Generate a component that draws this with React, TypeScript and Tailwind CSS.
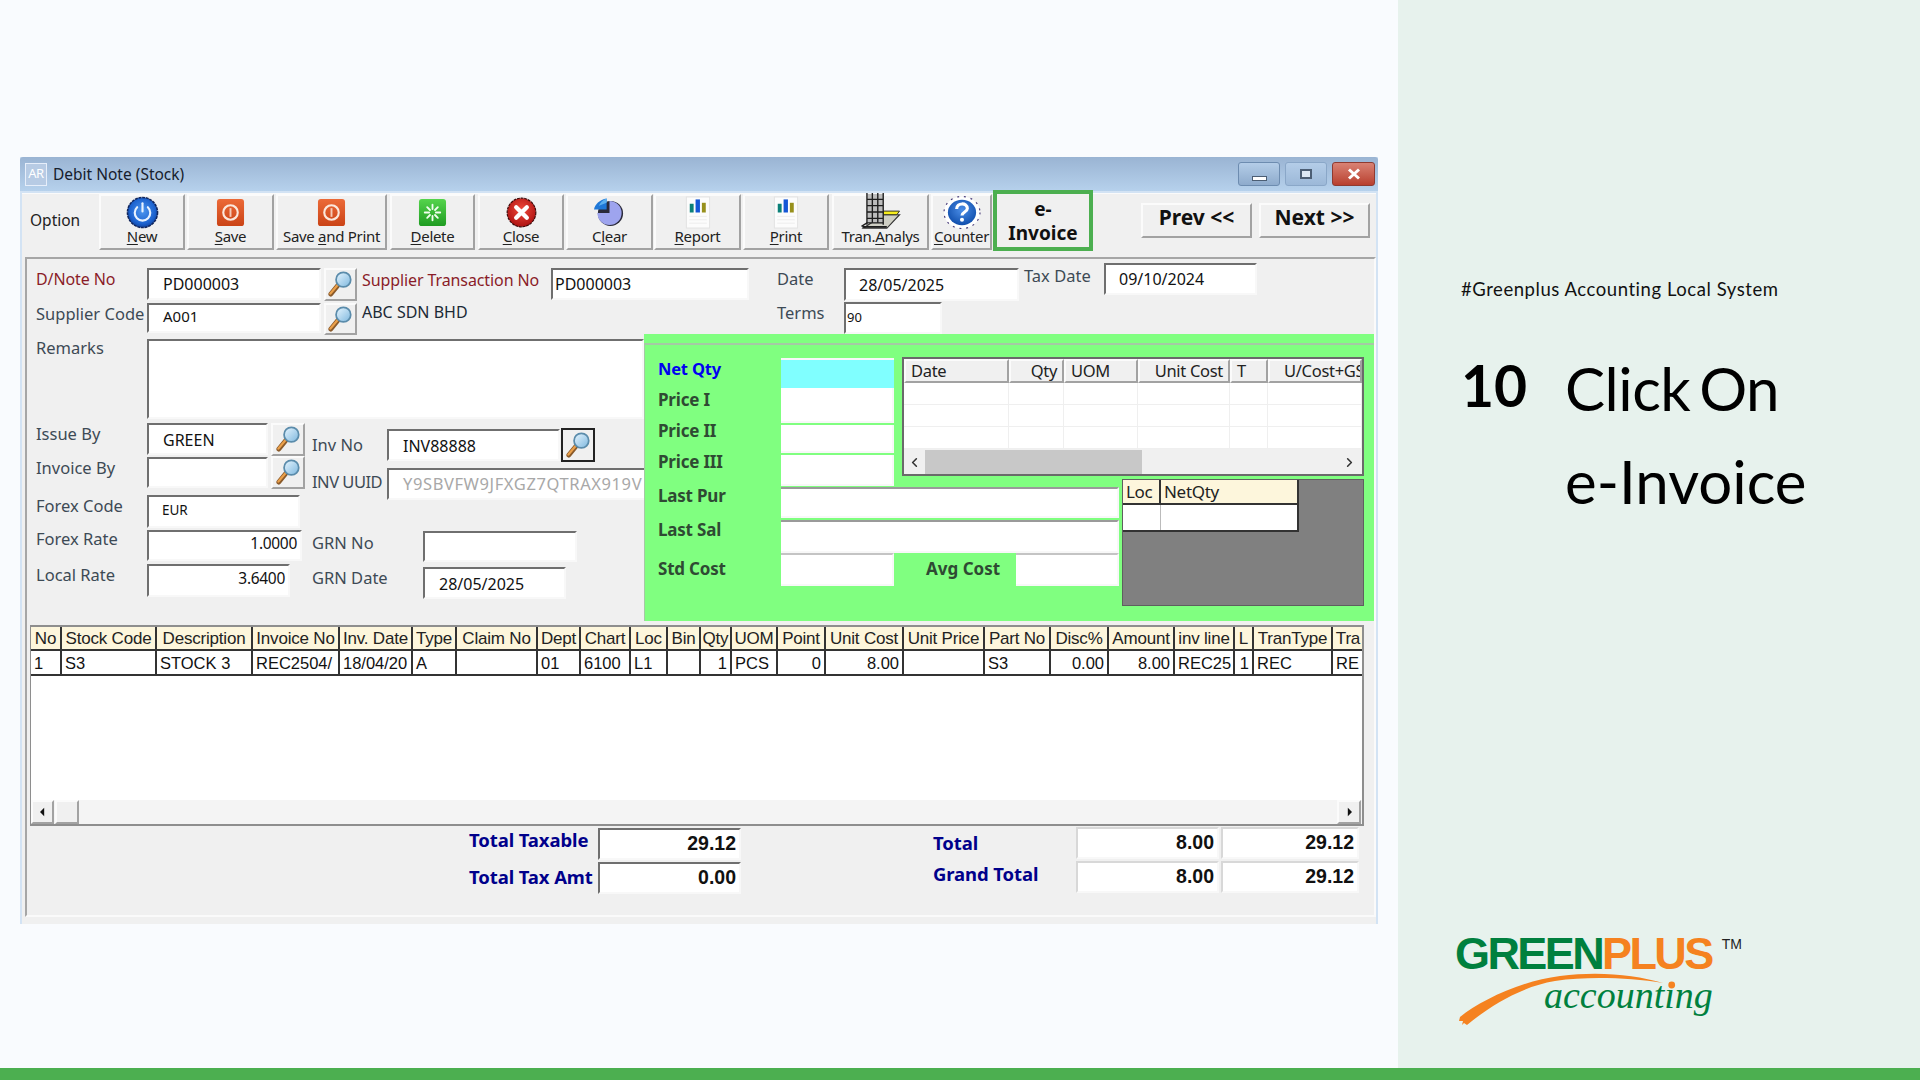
import React from "react";
import { ChevronLeft, ChevronRight } from "lucide-react";

const sunken = "bg-white border-2 border-t-[#6f6f6f] border-l-[#6f6f6f] border-r-[#f8f8f8] border-b-[#f8f8f8]";
const raised = "bg-[#f0f0f0] border-2 border-t-[#fbfbfb] border-l-[#fbfbfb] border-r-[#a2a2a2] border-b-[#a2a2a2]";

function Input({ className = "", children }: { className?: string; children?: React.ReactNode }) {
  return <div className={`${sunken} shrink-0 flex items-center whitespace-nowrap overflow-hidden text-[#111] ${className}`}>{children}</div>;
}

function Lens({ className = "" }: { className?: string }) {
  return (
    <svg viewBox="0 0 28 28" className={`w-[27px] h-[27px] mb-[2px] ${className}`}>
      <defs>
        <linearGradient id="lensg" x1="0" y1="0" x2="1" y2="1">
          <stop offset="0" stopColor="#e8f6ff" />
          <stop offset="1" stopColor="#7db7de" />
        </linearGradient>
      </defs>
      <path d="M4 25 L12 15" stroke="#8a5a2a" strokeWidth="5" strokeLinecap="round" />
      <path d="M3.5 24.5 L11 15.5" stroke="#eba04a" strokeWidth="2.4" strokeLinecap="round" />
      <circle cx="17" cy="10" r="7.6" fill="url(#lensg)" stroke="#5b8cab" strokeWidth="1.8" />
    </svg>
  );
}

function Lookup({ className = "" }: { className?: string }) {
  return <div className={`${raised} shrink-0 flex items-center justify-center ${className}`}><Lens /></div>;
}

function PowerIcon() {
  return (
    <svg viewBox="0 0 34 34" className="w-[33px] h-[33px]">
      <defs>
        <radialGradient id="pw" cx="0.5" cy="0.45" r="0.6">
          <stop offset="0" stopColor="#4d96ef" />
          <stop offset="0.7" stopColor="#1c62cf" />
          <stop offset="1" stopColor="#0d3a92" />
        </radialGradient>
      </defs>
      <circle cx="17" cy="17" r="15.5" fill="url(#pw)" stroke="#12265c" strokeWidth="1.6" strokeDasharray="3 0.8" />
      <path d="M11.5 11.5 A8 8 0 1 0 22.5 11.5" fill="none" stroke="#e8f2ff" strokeWidth="2.2" strokeLinecap="round" />
      <path d="M17 7.5 V16" stroke="#e8f2ff" strokeWidth="2.2" strokeLinecap="round" />
    </svg>
  );
}

function SaveIcon() {
  return (
    <svg viewBox="0 0 30 30" className="w-[29px] h-[29px]">
      <defs>
        <linearGradient id="sv" x1="0" y1="0" x2="0" y2="1">
          <stop offset="0" stopColor="#ec6a38" />
          <stop offset="1" stopColor="#ca4316" />
        </linearGradient>
      </defs>
      <rect x="1" y="1" width="28" height="28" rx="3" fill="url(#sv)" />
      <circle cx="15" cy="15" r="7.5" fill="none" stroke="#fbe7dc" strokeWidth="2.2" />
      <rect x="14" y="10.5" width="2" height="9" fill="#fbe7dc" opacity="0.8" />
    </svg>
  );
}

function DeleteIcon() {
  return (
    <svg viewBox="0 0 30 30" className="w-[29px] h-[29px]">
      <defs>
        <linearGradient id="dl" x1="0" y1="0" x2="0" y2="1">
          <stop offset="0" stopColor="#55d44c" />
          <stop offset="1" stopColor="#1f9c22" />
        </linearGradient>
      </defs>
      <rect x="1" y="1" width="28" height="28" rx="3" fill="url(#dl)" />
      <g stroke="#f2fff0" strokeWidth="1.9" strokeLinecap="round">
        <path d="M15 7 V11.5" /><path d="M15 18.5 V23" /><path d="M7 15 H11.5" /><path d="M18.5 15 H23" />
        <path d="M9.5 9.5 L12.4 12.4" /><path d="M17.6 17.6 L20.5 20.5" /><path d="M20.5 9.5 L17.6 12.4" /><path d="M12.4 17.6 L9.5 20.5" />
      </g>
    </svg>
  );
}

function CloseIcon() {
  return (
    <svg viewBox="0 0 32 32" className="w-[31px] h-[31px]">
      <defs>
        <radialGradient id="cl" cx="0.5" cy="0.4" r="0.65">
          <stop offset="0" stopColor="#f04a3c" />
          <stop offset="1" stopColor="#a80d0d" />
        </radialGradient>
      </defs>
      <circle cx="16" cy="16" r="14.8" fill="url(#cl)" stroke="#3a0a0a" strokeWidth="1.2" strokeDasharray="3 0.8" />
      <path d="M10.5 10.5 L21.5 21.5 M21.5 10.5 L10.5 21.5" stroke="#ffffff" strokeWidth="4.4" strokeLinecap="round" />
    </svg>
  );
}

function ClearIcon() {
  return (
    <svg viewBox="0 0 34 32" className="w-[33px] h-[31px]">
      <circle cx="18" cy="17" r="13" fill="#2a2a3a" />
      <path d="M17 4 A12.5 12.5 0 1 1 4.5 16.5 L17 16.5 Z" fill="#9ea4ee" />
      <path d="M14 1.5 V13 L1 13 C1.5 8 7 2.5 14 1.5 Z" fill="#1f78d8" />
      <path d="M14 1.5 V6 L6 9 C7.5 5.5 10 3 14 1.5 Z" fill="#5bb0f0" />
    </svg>
  );
}

function ChartPage() {
  return (
    <svg viewBox="0 0 26 34" className="w-[26px] h-[33px]">
      <rect x="1" y="1" width="24" height="32" fill="#fcfcfc" stroke="#e2e2e2" />
      <rect x="4.5" y="8" width="4" height="9" fill="#0b8078" />
      <rect x="10.5" y="3.5" width="4.5" height="13.5" fill="#1456d6" />
      <rect x="17" y="7" width="4" height="10" fill="#97901c" />
      <path d="M4 21 H22 M4 24.5 H22 M4 28 H22" stroke="#ececec" strokeWidth="1" />
    </svg>
  );
}

function TranIcon() {
  return (
    <svg viewBox="0 0 46 42" className="w-[43px] h-[38px]">
      <path d="M26 24 H44 L30 39 H4 Z" fill="#cfcfc4" stroke="#333" strokeWidth="1.3" />
      <path d="M26 20 H44 L41 24 H26 Z" fill="#f6ec1c" stroke="#222" strokeWidth="1" />
      <rect x="8" y="1" width="18" height="32" fill="#bdbdbd" />
      <path d="M8 0 V35 M14 0 V33 M20 0 V33 M26 0 V35 M8 7 H26 M8 14 H26 M8 21 H26 M8 28 H26" stroke="#1d1d1d" strokeWidth="1.5" />
      <path d="M2 37 L8 33 H26" fill="none" stroke="#1d1d1d" strokeWidth="1.6" />
      <path d="M3 37.5 H30" stroke="#1d1d1d" strokeWidth="2" />
    </svg>
  );
}

function HelpIcon() {
  return (
    <svg viewBox="0 0 40 36" className="w-[40px] h-[35px]">
      <defs>
        <radialGradient id="hp" cx="0.5" cy="0.4" r="0.65">
          <stop offset="0" stopColor="#4b8ee8" />
          <stop offset="1" stopColor="#0c4aa8" />
        </radialGradient>
      </defs>
      <ellipse cx="20" cy="18" rx="18.5" ry="16.5" fill="#fff" stroke="#4b3f7c" strokeWidth="1.2" strokeDasharray="2 5" />
      <ellipse cx="20" cy="18" rx="14.5" ry="13" fill="url(#hp)" />
      <path d="M14.5 14.5 C14.5 7.5 25.5 7.5 25.5 14 C25.5 17.5 20 17.5 20 21" fill="none" stroke="#fff" strokeWidth="3.2" />
      <circle cx="20" cy="25.5" r="2.1" fill="#fff" />
    </svg>
  );
}

function ToolBtn({ className = "", icon, children }: { className?: string; icon: React.ReactNode; children: React.ReactNode }) {
  return (
    <div className={`${raised} shrink-0 h-[56px] flex flex-col items-center overflow-visible ${className}`}>
      <div className="h-[32px] flex items-center justify-center">{icon}</div>
      <div className="text-[15px] leading-[17px] text-[#222] tracking-[-0.3px] whitespace-nowrap">{children}</div>
    </div>
  );
}

function U({ children }: { children: React.ReactNode }) {
  return <span className="underline underline-offset-2">{children}</span>;
}

function Title() {
  return (
    <div className="h-[34px] flex items-center rounded-t-[3px] bg-gradient-to-b from-[#9ab4d3] to-[#b6d1ec] pl-[5px] pr-[3px]">
      <div className="w-[22px] h-[23px] bg-[#b7cbe4] border border-[#e6eefa] flex items-center justify-center text-white text-[13px] tracking-[-0.5px]">AR</div>
      <div className="ml-[6px] pt-[2px] text-[15.5px] text-[#16202c]">Debit Note (Stock)</div>
      <div className="ml-auto flex items-center gap-[5px]">
        <div className="w-[42px] h-[24px] rounded-[3px] border border-[#6d8cb0] bg-gradient-to-b from-[#b4cde8] to-[#8eabcc] flex items-end justify-center pb-[4px]">
          <div className="w-[15px] h-[5px] bg-white border border-[#4c5e74]" />
        </div>
        <div className="w-[42px] h-[24px] rounded-[3px] border border-[#8aa7c8] bg-gradient-to-b from-[#b4cde8] to-[#9cb8d8] flex items-center justify-center">
          <div className="w-[12px] h-[10px] bg-[#dde8f4] border-2 border-[#4c5e74]" />
        </div>
        <div className="w-[43px] h-[24px] rounded-[3px] border border-[#8f3a30] bg-gradient-to-b from-[#d98274] to-[#b83e2e] flex items-center justify-center text-white">
          <svg viewBox="0 0 14 12" className="w-[14px] h-[12px]"><path d="M2 1.5 L12 10.5 M12 1.5 L2 10.5" stroke="#fff" strokeWidth="3" /></svg>
        </div>
      </div>
    </div>
  );
}

function Toolbar() {
  return (
    <div className="h-[56px] flex bg-[#f0f0f0] border-t border-[#fafafa]">
      <div className="w-[77px] shrink-0 pl-[8px] pb-[2px] flex items-center text-[15.5px] text-[#222]">Option</div>
      <ToolBtn className="w-[86px]" icon={<PowerIcon />}><U>N</U>ew</ToolBtn>
      <ToolBtn className="w-[87px] ml-[2px]" icon={<SaveIcon />}><U>S</U>ave</ToolBtn>
      <ToolBtn className="w-[111px] ml-[2px]" icon={<SaveIcon />}>Save <U>a</U>nd Print</ToolBtn>
      <ToolBtn className="w-[85px] ml-[3px]" icon={<DeleteIcon />}><U>D</U>elete</ToolBtn>
      <ToolBtn className="w-[86px] ml-[3px]" icon={<CloseIcon />}><U>C</U>lose</ToolBtn>
      <ToolBtn className="w-[87px] ml-[2px]" icon={<ClearIcon />}>C<U>l</U>ear</ToolBtn>
      <ToolBtn className="w-[87px] ml-[1px]" icon={<ChartPage />}><U>R</U>eport</ToolBtn>
      <ToolBtn className="w-[86px] ml-[2px]" icon={<ChartPage />}><U>P</U>rint</ToolBtn>
      <ToolBtn className="w-[97px] ml-[3px]" icon={<TranIcon />}>Tran.<U>A</U>nalys</ToolBtn>
      <ToolBtn className="w-[61px] ml-[2px]" icon={<HelpIcon />}><U>C</U>ounter</ToolBtn>
      <div className="shrink-0 w-[100px] h-[61px] -mt-[4px] ml-[1px] border-[4px] border-[#4caf50] bg-[#f0f0f0] flex flex-col items-center justify-center font-bold text-[19px] leading-[24px] text-[#111]">
        <span>e-</span>
        <span>Invoice</span>
      </div>
      <div className={`${raised} shrink-0 w-[111px] h-[35px] mt-[9px] ml-[48px] pb-[5px] flex items-center justify-center font-bold text-[21px] text-[#111]`}>Prev &lt;&lt;</div>
      <div className={`${raised} shrink-0 w-[111px] h-[35px] mt-[9px] ml-[7px] pb-[5px] flex items-center justify-center font-bold text-[21px] text-[#111]`}>Next &gt;&gt;</div>
    </div>
  );
}

const lab = "shrink-0 text-[16.5px] leading-[22px] text-[#3d4a55] whitespace-nowrap";
const redLab = "shrink-0 text-[16px] leading-[22px] tracking-[-0.1px] text-[#8a1c28] whitespace-nowrap";

function HeaderForm() {
  return (
    <div className="h-[75px] flex items-start">
      <div className="mt-[9px] ml-[9px] w-[713px] flex flex-col shrink-0">
        <div className="flex h-[35px]">
          <div className={`${redLab} w-[111px]`}>D/Note No</div>
          <Input className="w-[174px] h-[32px] pl-[14px] text-[16px]">PD000003</Input>
          <Lookup className="w-[33px] h-[33px] ml-[3px]" />
          <div className={`${redLab} w-[189px] ml-[5px] pt-[1px]`}>Supplier Transaction No</div>
          <Input className="w-[198px] h-[32px] pl-[2px] text-[16px]">PD000003</Input>
        </div>
        <div className="flex h-[33px]">
          <div className={`${lab} w-[111px]`}>Supplier Code</div>
          <Input className="w-[174px] h-[30px] pl-[14px] pb-[3px] text-[15px]">A001</Input>
          <Lookup className="w-[33px] h-[32px] ml-[3px]" />
          <div className="ml-[5px] text-[16px] text-[#1c2a36] -mt-[3px]">ABC SDN BHD</div>
        </div>
      </div>
      <div className="mt-[9px] ml-[28px] w-[175px] shrink-0 flex flex-col">
        <div className="flex h-[34px]">
          <div className={`${lab} w-[67px] shrink-0`}>Date</div>
          <Input className="w-[175px] h-[33px] pl-[13px] text-[16px]">28/05/2025</Input>
        </div>
        <div className="flex h-[32px]">
          <div className={`${lab} w-[67px] shrink-0`}>Terms</div>
          <Input className="w-[98px] h-[32px] pl-[1px] text-[13px]">90</Input>
        </div>
      </div>
      <div className="mt-[4px] ml-[72px] shrink-0 flex">
        <div className={`${lab} w-[80px] pt-[2px]`}>Tax Date</div>
        <Input className="w-[153px] h-[32px] pl-[13px] text-[16px]">09/10/2024</Input>
      </div>
    </div>
  );
}

function LeftForm() {
  return (
    <div className="w-[617px] shrink-0 pl-[9px] pt-[5px] flex flex-col">
      <div className="flex">
        <div className={`${lab} w-[111px] -mt-[2px]`}>Remarks</div>
        <Input className="w-[497px] h-[80px]" />
      </div>
      <div className="flex mt-[4px]">
        <div className="w-[276px] shrink-0 flex flex-col">
          <div className="flex h-[34px]">
            <div className={`${lab} w-[111px]`}>Issue By</div>
            <Input className="w-[121px] h-[32px] pl-[14px] pt-[1px] text-[16px]">GREEN</Input>
            <Lookup className="w-[34px] h-[33px] ml-[3px]" />
          </div>
          <div className="flex h-[38px]">
            <div className={`${lab} w-[111px]`}>Invoice By</div>
            <Input className="w-[121px] h-[31px]" />
            <Lookup className="w-[34px] h-[33px] ml-[3px] -mt-[1px]" />
          </div>
          <div className="flex h-[35px]">
            <div className={`${lab} w-[111px]`}>Forex Code</div>
            <Input className="w-[153px] h-[33px] border-b-[#9a9a9a] pl-[13px] pb-[3px] text-[13.5px]">EUR</Input>
          </div>
          <div className="flex h-[34px]">
            <div className={`${lab} w-[111px] -mt-[2px]`}>Forex Rate</div>
            <Input className="w-[155px] h-[31px] justify-end pr-[3px] pb-[3px] text-[15.5px] tracking-[-0.3px]">1.0000</Input>
          </div>
          <div className="flex h-[33px]">
            <div className={`${lab} w-[111px]`}>Local Rate</div>
            <Input className="w-[143px] h-[33px] justify-end pr-[3px] pb-[3px] text-[15.5px] tracking-[-0.3px]">3.6400</Input>
          </div>
        </div>
        <div className="flex flex-col pt-[6px]">
          <div className="flex h-[39px]">
            <div className={`${lab} w-[75px] pt-[5px]`}>Inv No</div>
            <Input className="w-[173px] h-[32px] pl-[14px] pt-[1px] text-[16px]">INV88888</Input>
            <div className="shrink-0 w-[34px] h-[34px] -mt-[1px] ml-[1px] border-2 border-[#222] flex items-center justify-center bg-[#f0f0f0]"><Lens /></div>
          </div>
          <div className="flex h-[63px]">
            <div className={`${lab} w-[75px] pt-[3px] tracking-[-0.5px]`}>INV UUID</div>
            <Input className="w-[257px] h-[32px] pl-[14px] text-[16.5px] tracking-[0.6px] !text-[#a8a8a8] border-r-0">Y9SBVFW9JFXGZ7QTRAX919V</Input>
          </div>
          <div className="flex h-[36px]">
            <div className={`${lab} w-[111px] pt-[1px]`}>GRN No</div>
            <Input className="w-[154px] h-[31px]" />
          </div>
          <div className="flex">
            <div className={`${lab} w-[111px]`}>GRN Date</div>
            <Input className="w-[143px] h-[32px] pl-[14px] pt-[1px] text-[16px]">28/05/2025</Input>
          </div>
        </div>
      </div>
    </div>
  );
}

const gLab = "shrink-0 font-bold text-[17px] leading-[22px] tracking-[-0.2px] text-[#2f4a33] whitespace-nowrap";

function PriceGrid() {
  const cols = ["Date", "Qty", "UOM", "Unit Cost", "T", "U/Cost+GS"];
  return (
    <div className="w-[462px] h-[119px] border-2 border-[#6a6a6a] bg-white flex flex-col overflow-hidden text-[16.5px] text-[#222] tracking-[-0.3px]">
      <div className="grid grid-cols-[105px_55px_74px_92px_38px_94px] h-[24px] bg-[#f0f0f0]">
        {cols.map((c, i) => (
          <div key={c} className={`${raised} overflow-hidden whitespace-nowrap flex items-center ${i === 5 ? "pl-[14px]" : "px-[5px]"} ${i === 1 || i === 3 ? "justify-end" : ""}`}>{c}</div>
        ))}
      </div>
      {[0, 1, 2].map((r) => (
        <div key={r} className="grid grid-cols-[105px_55px_74px_92px_38px_94px] h-[22px] border-b border-[#efefef]">
          {cols.map((c) => <div key={c} className="border-r border-[#efefef]" />)}
        </div>
      ))}
      <div className="flex-1 flex items-center bg-[#f0f0f0] pt-[1px]">
        <ChevronLeft className="w-[15px] h-[15px] ml-[3px] text-[#333] shrink-0" strokeWidth={2.5} />
        <div className="w-[217px] h-full bg-[#c8c8c8] ml-[3px]" />
        <ChevronRight className="w-[15px] h-[15px] ml-auto mr-[5px] text-[#333]" strokeWidth={2.5} />
      </div>
    </div>
  );
}

function GreenPanel() {
  return (
    <div className="w-[730px] h-[287px] shrink-0 flex flex-col bg-[#80ff80]">
      <div className="h-[9px] shrink-0" />
      <div className="flex-1 border-t-2 border-l border-[#a5c9a5] pl-[13px] pt-[12px]">
        <div className="flex h-[130px]">
          <div className="w-[236px] shrink-0 flex flex-col">
            <div className="flex h-[30px] mt-[1px]">
              <div className="w-[123px] shrink-0 font-bold text-[16.5px] leading-[22px] tracking-[-0.2px] text-[#0000f0]">Net Qty</div>
              <div className="w-[113px] h-[30px] bg-[#80ffff] border-t-2 border-t-[#f8f8f8]" />
            </div>
            <div className="flex h-[37px]">
              <div className={`${gLab} w-[123px] pt-[1px]`}>Price I</div>
              <Input className="w-[113px] h-[35px] border-t-0 border-l-0 border-b-[#9a9a9a]" />
            </div>
            <div className="flex h-[30px]">
              <div className={`${gLab} w-[123px] -mt-[5px]`}>Price II</div>
              <Input className="w-[113px] h-[28px] border-t-0 border-l-0 border-b-[#9a9a9a]" />
            </div>
            <div className="flex h-[32px]">
              <div className={`${gLab} w-[123px] -mt-[4px]`}>Price III</div>
              <Input className="w-[113px] h-[31px] border-t-0 border-l-0 border-b-[#9a9a9a]" />
            </div>
          </div>
          <div className="ml-[8px]"><PriceGrid /></div>
        </div>
        <div className="flex">
          <div className="w-[461px] shrink-0 flex flex-col">
            <div className="flex h-[33px]">
              <div className={`${gLab} w-[123px] -mt-[2px]`}>Last Pur</div>
              <Input className="w-[338px] h-[31px] border-t-[#9a9a9a] border-l-0 border-b-[#9a9a9a]" />
            </div>
            <div className="flex h-[33px]">
              <div className={`${gLab} w-[123px] -mt-[1px]`}>Last Sal</div>
              <Input className="w-[338px] h-[33px] border-t-[#9a9a9a] border-l-0 border-b-[#9a9a9a]" />
            </div>
            <div className="flex">
              <div className={`${gLab} w-[123px] pt-[5px]`}>Std Cost</div>
              <Input className="w-[113px] h-[33px] border-l-0 border-t-[#c4c4c4]" />
              <div className={`${gLab} w-[122px] pt-[5px] pl-[32px] tracking-[0px]`}>Avg Cost</div>
              <Input className="w-[103px] h-[33px] border-l-0 border-t-[#c4c4c4]" />
            </div>
          </div>
          <div className="ml-[3px] -mt-[8px] w-[242px] h-[127px] bg-[#808080] border border-[#5f5f5f]">
            <div className="w-[176px] h-[52px] border-r-2 border-b-2 border-[#333] bg-white text-[17px] tracking-[-0.3px] text-[#222]">
              <div className="grid grid-cols-[38px_1fr] h-[25px] bg-[#fdf6dc] border-b-2 border-[#333]">
                <div className="border-r-2 border-[#333] pl-[3px] leading-[23px]">Loc</div>
                <div className="pl-[3px] leading-[23px]">NetQty</div>
              </div>
              <div className="grid grid-cols-[38px_1fr] h-[25px]">
                <div className="border-r border-[#bbb]" />
                <div />
              </div>
            </div>
          </div>
        </div>
      </div>
    </div>
  );
}

const tableCols = "grid grid-cols-[31px_95px_96px_87px_73px_44px_81px_43px_50px_37px_33px_31px_46px_48px_78px_81px_66px_58px_66px_60px_19px_79px_32px]";
const heads = ["No","Stock Code","Description","Invoice No","Inv. Date","Type","Claim No","Dept","Chart","Loc","Bin","Qty","UOM","Point","Unit Cost","Unit Price","Part No","Disc%","Amount","inv line","L","TranType","Tra"];
const row: [string, boolean][] = [["1",false],["S3",false],["STOCK 3",false],["REC2504/",false],["18/04/20",false],["A",false],["",false],["01",false],["6100",false],["L1",false],["",false],["1",true],["PCS",false],["0",true],["8.00",true],["",true],["S3",false],["0.00",true],["8.00",true],["REC25",false],["1",true],["REC",false],["RE",false]];

function LinesTable() {
  return (
    <div className="mx-[3px] mt-[4px] h-[201px] w-[1334px] border-t-2 border-r-2 border-b-2 border-l border-[#8e8e8e] bg-white flex flex-col font-['Liberation_Sans',sans-serif] text-[16.5px] text-[#111] overflow-hidden">
      <div className={`${tableCols} h-[24px] bg-[#fdf6dc] border-b-2 border-[#333] shrink-0`}>
        {heads.map((h) => (
          <div key={h} className="border-r-2 border-[#333] px-[1px] text-center whitespace-nowrap overflow-hidden leading-[23px] text-[17px] tracking-[-0.2px] text-[#222]">{h}</div>
        ))}
      </div>
      <div className={`${tableCols} h-[25px] border-b-2 border-[#333] shrink-0`}>
        {row.map(([v, right], i) => (
          <div key={i} className={`border-r-2 border-[#333] px-[3px] whitespace-nowrap overflow-hidden leading-[24px] ${right ? "text-right" : "text-left"}`}>{v}</div>
        ))}
      </div>
      <div className="flex-1" />
      <div className="h-[24px] shrink-0 bg-[#f4f4f4] flex">
        <div className={`${raised} w-[23px] flex items-center justify-center`}>
          <svg viewBox="0 0 6 10" className="w-[5px] h-[10px]"><path d="M5 0 L0 5 L5 10 Z" fill="#111" /></svg>
        </div>
        <div className={`${raised} w-[24px] ml-[1px]`} />
        <div className={`${raised} w-[24px] ml-auto mr-[1px] flex items-center justify-center`}>
          <svg viewBox="0 0 6 10" className="w-[5px] h-[10px]"><path d="M1 0 L6 5 L1 10 Z" fill="#111" /></svg>
        </div>
      </div>
    </div>
  );
}

const navy = "shrink-0 font-bold text-[18.5px] leading-[22px] tracking-[-0.1px] text-[#00008b] whitespace-nowrap";
const totalInput = "justify-end pr-[3px] font-['Liberation_Sans',sans-serif] font-bold text-[19.5px]";

function Totals() {
  return (
    <div className="flex pl-[442px] mt-[1px]">
      <div className="w-[272px] shrink-0 flex flex-col mt-[1px]">
        <div className="flex h-[34px]">
          <div className={`${navy} w-[129px] pt-[1px]`}>Total Taxable</div>
          <Input className={`w-[143px] h-[32px] border-b-[#555] border-r-[#999] ${totalInput}`}>29.12</Input>
        </div>
        <div className="flex">
          <div className={`${navy} w-[129px] pt-[4px]`}>Total Tax Amt</div>
          <Input className={`w-[143px] h-[32px] border-b-[#777] border-r-[#999] ${totalInput}`}>0.00</Input>
        </div>
      </div>
      <div className="ml-[192px] shrink-0 flex flex-col">
        <div className="flex h-[34px]">
          <div className={`${navy} w-[143px] pt-[5px]`}>Total</div>
          <Input className={`w-[143px] h-[32px] border-t-[#d8d8d8] border-l-[#d8d8d8] border-b-[#b8b8b8] ${totalInput}`}>8.00</Input>
          <Input className={`w-[138px] h-[32px] ml-[2px] border-t-[#d8d8d8] border-l-[#d8d8d8] border-b-[#b8b8b8] ${totalInput}`}>29.12</Input>
        </div>
        <div className="flex">
          <div className={`${navy} w-[143px] pt-[2px]`}>Grand Total</div>
          <Input className={`w-[143px] h-[32px] border-t-[#d8d8d8] border-l-[#d8d8d8] border-b-[#b8b8b8] ${totalInput}`}>8.00</Input>
          <Input className={`w-[138px] h-[32px] ml-[2px] border-t-[#d8d8d8] border-l-[#d8d8d8] border-b-[#b8b8b8] ${totalInput}`}>29.12</Input>
        </div>
      </div>
    </div>
  );
}

function Window() {
  return (
    <div className="w-[1358px] h-[767px] flex flex-col bg-[#d3e3f4] font-['Noto_Sans',sans-serif]">
      <Title />
      <div className="flex-1 mt-[2px] mx-[2px] bg-[#f0f0f0] flex flex-col">
        <Toolbar />
        <div className="mt-[8px] ml-[3px] w-[1351px] h-[660px] border-2 border-t-[#a6a6a6] border-l-[#a6a6a6] border-r-[#fafafa] border-b-[#fafafa] flex flex-col">
          <HeaderForm />
          <div className="flex">
            <LeftForm />
            <GreenPanel />
          </div>
          <LinesTable />
          <Totals />
        </div>
      </div>
    </div>
  );
}

function Logo() {
  return (
    <div className="relative w-[300px] h-[110px] ml-[-11px] font-['Liberation_Sans',sans-serif]">
      <svg viewBox="0 0 300 110" className="absolute inset-0 w-[300px] h-[110px]">
        <path d="M10 86 C30 70 70 50 110 45 C150 40 185 44 213 52 C180 47 140 45 105 50 C70 56 40 75 17 94 L14 92 L12 94 L13 90 L9 90 Z" fill="#f58220" />
      </svg>
      <div className="relative flex items-start h-[45px] pl-[5px] text-[45px] leading-[45px] font-bold tracking-[-2.6px]">
        <span className="text-[#00803e]">GREEN</span>
        <span className="text-[#f58220]">PLUS</span>
        <span className="ml-[10px] mt-[5px] text-[14px] leading-[16px] font-normal tracking-normal text-[#222]">TM</span>
      </div>
      <div className="relative ml-[94px] h-[45px] font-['Liberation_Serif',serif] italic text-[38px] leading-[38px] text-[#00803e]">accounting</div>
      <svg viewBox="0 0 300 110" className="absolute inset-0 w-[300px] h-[110px]">
        <circle cx="221.7" cy="54" r="3.4" fill="#f58220" />
      </svg>
    </div>
  );
}

export default function App() {
  return (
    <div className="w-[1920px] h-[1080px] overflow-hidden flex flex-col bg-[#f9fbfe]">
      <div className="flex-1 flex min-h-0">
        <div className="flex-1 pt-[157px] pl-[20px]"><Window /></div>
        <div className="w-[522px] shrink-0 bg-[#e7f2ed] font-['Lato',sans-serif] text-black pl-[63px] flex flex-col">
          <div className="mt-[278px] text-[18.5px] leading-[22px] tracking-[0.55px] text-[#111]">#Greenplus Accounting Local System</div>
          <div className="flex mt-[42px]">
            <div className="w-[104px] shrink-0 -mt-[3px] font-bold text-[57px] leading-[93px]">10</div>
            <div className="text-[60px] leading-[93px]">
              <div className="tracking-[-0.5px] [word-spacing:-6px]">Click On</div>
              <div>e-Invoice</div>
            </div>
          </div>
          <div className="mt-[403px]"><Logo /></div>
        </div>
      </div>
      <div className="h-[12px] shrink-0 bg-[#4caf50]" />
    </div>
  );
}
